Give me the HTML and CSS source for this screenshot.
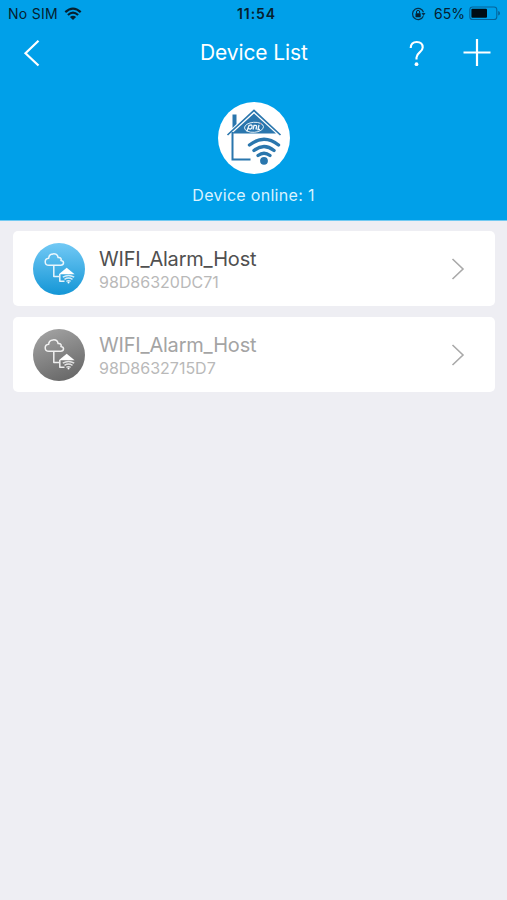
FILE: index.html
```html
<!DOCTYPE html>
<html lang="en">
<head>
<meta charset="utf-8">
<title>Device List</title>
<link rel="stylesheet" href="styles.css">
</head>
<body>
<svg class="defs" width="0" height="0" aria-hidden="true">
  <defs>
    <linearGradient id="blue" x1="0" y1="0" x2="0" y2="1"><stop offset="0" stop-color="#72c9f5"/><stop offset="1" stop-color="#1496d6"/></linearGradient>
    <linearGradient id="gray" x1="0.2" y1="0" x2="0.6" y2="1"><stop offset="0" stop-color="#a3a3a3"/><stop offset="1" stop-color="#696969"/></linearGradient>
    <symbol id="host" viewBox="0 0 52 52">
      <g fill="none" stroke="#fff" stroke-width="1.500" stroke-linejoin="round" opacity=".88">
        <path d="M16 22.300c-5 0-5-6.500-.3-7 0-5.500 8.500-6 9.400-.8 3-.3 3.400 1.900 2.800 3 4 .8 3 4.800-.2 4.800z"/>
        <path d="M20.800 22.500V33.500H26M26.800 31V38.300H31.500"/>
      </g>
      <path d="M25.800 31.300L33.700 24.800 41.600 31.300z" fill="#fff"/>
      <g fill="none" stroke="#fff" stroke-width="1.400" opacity=".8"><path d="M29.800 34.200q5.700-3.500 11.400 0M31.500 36.300q4-2.600 8 0M33.400 38.300q2.100-1.400 4.200 0"/></g>
      <circle cx="35.500" cy="39.500" r="1" fill="#fff"/>
    </symbol>
  </defs>
</svg>
<header class="header">
  <div class="status">
    <span class="carrier">No SIM</span>
    <svg class="wifi" width="18" height="14" viewBox="0 0 18 14"><g fill="none" stroke="#06202f" stroke-width="2.200"><path d="M1.300 5.100Q9-2 16.700 5.100"/><path d="M3.900 8Q9 3.400 14.100 8"/></g><path d="M5.900 10.100Q9 7.300 12.100 10.100L9 13z" fill="#06202f"/></svg>
    <span class="time">11:54</span>
    <svg class="lock" width="15" height="14" viewBox="0 0 15 14"><path d="M12.300 9.200A5.600 5.600 0 1 1 12.500 5.200" fill="none" stroke="#06304a" stroke-width="1.200"/><path d="M10.500 6H14.500L12.500 9z" fill="#06304a"/><rect x="4.500" y="6.200" width="5.200" height="4.100" rx=".5" fill="#06202f"/><path d="M5.500 6.500V5a1.600 1.600 0 0 1 3.200 0v1.500" fill="none" stroke="#06202f" stroke-width="1"/></svg>
    <span class="percent">65%</span>
    <svg class="battery" width="32" height="15" viewBox="0 0 32 15"><rect x=".8" y="1" width="27" height="12.500" rx="2.800" fill="none" stroke="#056399" stroke-width="1.100"/><rect x="2.400" y="2.800" width="15.600" height="9" rx="1" fill="#000c14"/><path d="M29.200 5v4.500q1.800-.5 1.800-2.250T29.200 5" fill="#056399"/></svg>
  </div>
  <nav class="nav">
    <svg class="back" width="18" height="28" viewBox="0 0 18 28"><path d="M15.500 1.800L2.500 14.200 15.500 26.500" fill="none" stroke="#fff" stroke-width="2.200"/></svg>
    <h1 class="title">Device List</h1>
    <svg class="help" width="16" height="28" viewBox="0 0 16 28"><path d="M1.700 9C1.700 5 4 3 7.700 3S13.700 5.200 13.700 8.500C13.700 13.300 7.500 13.500 7.500 18.500V20.500" fill="none" stroke="#fff" stroke-width="2.100"/><circle cx="7.500" cy="25.200" r="1.900" fill="#fff"/></svg>
    <svg class="add" width="28" height="28" viewBox="0 0 28 28"><path d="M.5 13.500H27.500M14 0V27" fill="none" stroke="#fff" stroke-width="2.200"/></svg>
  </nav>
  <div class="summary">
    <svg class="logo" width="72" height="72" viewBox="0 0 72 72">
      <circle cx="36" cy="36" r="36" fill="#fff"/>
      <path d="M14.500 26V12.500H18.500V22z" fill="#2a76ad"/>
      <path d="M9.500 33L36 8.500 62.500 33" fill="none" stroke="#2a76ad" stroke-width="1.700"/>
      <path d="M14 31.500L36 11.500 58 31.500z" fill="#2a76ad"/>
      <path d="M14.500 30V57.500H32.500" fill="none" stroke="#2a76ad" stroke-width="2"/>
      <g fill="none" stroke="#f2f8fc"><ellipse cx="36" cy="25.300" rx="9.500" ry="5" stroke-width=".9" transform="rotate(-4 36 25.300)"/><path d="M28.800 29.500L31 23.500Q34.500 22 34 25T30.500 26.500M35 27.500L36 23.500Q39 22.800 38.500 25L38 27.500M41 23L40 27.500H42" stroke-width="1.300"/></g>
      <path d="M42 22.200l1-.8" stroke="#de6970" stroke-width="1"/>
      <g fill="none" stroke="#2a76ad" stroke-width="3.400" stroke-linecap="round"><path d="M31.500 43Q46 31.500 60.500 43"/><path d="M36 48.500Q46 40.500 56 48.500"/><path d="M40 53.500Q46 48.800 52 53.500"/></g>
      <circle cx="46" cy="58.800" r="3.900" fill="#2a76ad"/>
    </svg>
    <p class="online">Device online: 1</p>
  </div>
</header>
<main class="list">
  <article class="card">
    <svg class="avatar" width="52" height="52" viewBox="0 0 52 52"><circle cx="26" cy="26" r="26" fill="url(#blue)"/><use href="#host"/></svg>
    <div class="info"><h2 class="name">WIFI_Alarm_Host</h2><p class="mac">98D86320DC71</p></div>
    <svg class="chevron" width="14" height="22" viewBox="0 0 14 22"><path d="M1.500 1L12 11 1.500 21" fill="none" stroke="#a9a9a9" stroke-width="1.600"/></svg>
  </article>
  <article class="card offline">
    <svg class="avatar" width="52" height="52" viewBox="0 0 52 52"><circle cx="26" cy="26" r="26" fill="url(#gray)"/><use href="#host"/></svg>
    <div class="info"><h2 class="name">WIFI_Alarm_Host</h2><p class="mac">98D8632715D7</p></div>
    <svg class="chevron" width="14" height="22" viewBox="0 0 14 22"><path d="M1.500 1L12 11 1.500 21" fill="none" stroke="#a9a9a9" stroke-width="1.600"/></svg>
  </article>
</main>
</body>
</html>
```
FILE: styles.css
```css
* { box-sizing: border-box; }
body { margin: 0; min-height: 900px; background: #eeeef3; font-family: Inter, "Liberation Sans", sans-serif; }
h1, h2, p { margin: 0; font-weight: 400; white-space: nowrap; }
svg { display: block; flex: none; }
.defs { position: absolute; }
.header { height: 221px; background: #00a0e9; border-bottom: 1px solid #72caf2; color: #fff; }
.status { height: 27px; display: grid; grid-template-columns: 56px 173px 174px 23px 35px 32px; align-items: center; padding-left: 8px; color: #06202f; font-size: 14px; line-height: 27px; }
.carrier { letter-spacing: .3px; }
.time { font-weight: 600; letter-spacing: .9px; }
.nav { height: 51px; display: grid; grid-template-columns: 177px 209px 54px 28px; padding-left: 23px; align-items: center; }
.title { font-size: 21px; line-height: 50px; letter-spacing: -.1px; }
.summary { display: flex; flex-direction: column; align-items: center; padding-top: 24px; }
.online { margin-top: 10px; font-size: 16px; line-height: 22px; letter-spacing: .3px; color: #d9f3ff; }
.list { display: flex; flex-direction: column; gap: 11px; padding: 10px 12px 0 13px; }
.card { height: 75px; display: flex; align-items: center; padding: 0 30px 0 20px; background: #fff; border-radius: 5px; }
.info { margin-left: 14px; flex: 1; }
.name { font-size: 20px; line-height: 26px; letter-spacing: -.2px; color: #505050; }
.mac { font-size: 16px; line-height: 20px; color: #b9b9b9; }
.offline .name { color: #a4a4a4; }
```
